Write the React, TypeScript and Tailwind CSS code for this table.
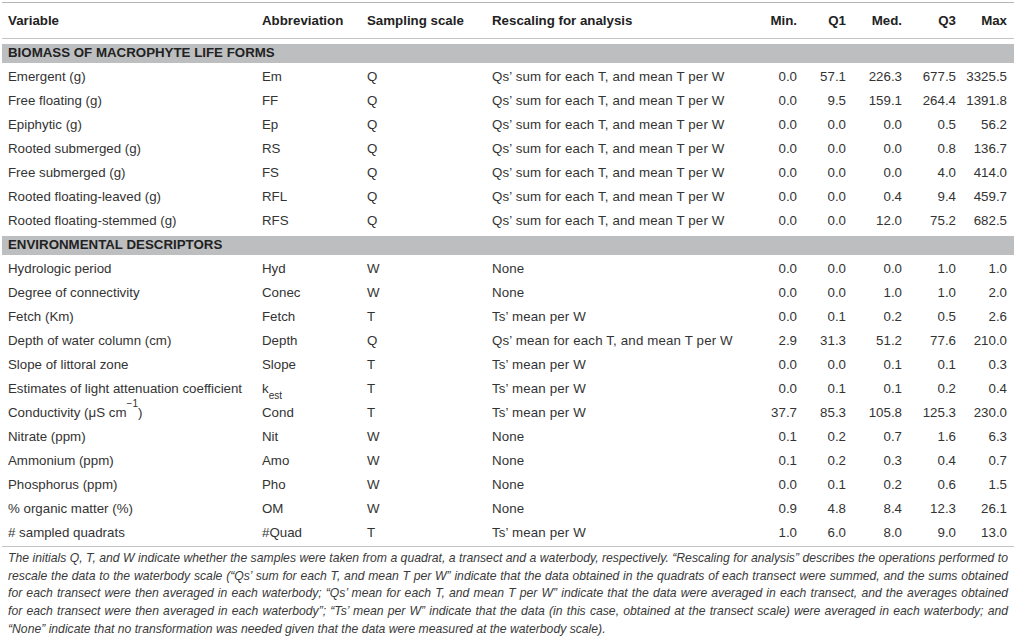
import React from "react";

type Row = {
  v: React.ReactNode;
  a: React.ReactNode;
  s: string;
  r: string;
  n: string[];
};

const SUM = "Qs\u2019 sum for each T, and mean T per W";
const TS = "Ts\u2019 mean per W";

const bio: Row[] = [
  { v: "Emergent (g)", a: "Em", s: "Q", r: SUM, n: ["0.0", "57.1", "226.3", "677.5", "3325.5"] },
  { v: "Free floating (g)", a: "FF", s: "Q", r: SUM, n: ["0.0", "9.5", "159.1", "264.4", "1391.8"] },
  { v: "Epiphytic (g)", a: "Ep", s: "Q", r: SUM, n: ["0.0", "0.0", "0.0", "0.5", "56.2"] },
  { v: "Rooted submerged (g)", a: "RS", s: "Q", r: SUM, n: ["0.0", "0.0", "0.0", "0.8", "136.7"] },
  { v: "Free submerged (g)", a: "FS", s: "Q", r: SUM, n: ["0.0", "0.0", "0.0", "4.0", "414.0"] },
  { v: "Rooted floating-leaved (g)", a: "RFL", s: "Q", r: SUM, n: ["0.0", "0.0", "0.4", "9.4", "459.7"] },
  { v: "Rooted floating-stemmed (g)", a: "RFS", s: "Q", r: SUM, n: ["0.0", "0.0", "12.0", "75.2", "682.5"] },
];

const env: Row[] = [
  { v: "Hydrologic period", a: "Hyd", s: "W", r: "None", n: ["0.0", "0.0", "0.0", "1.0", "1.0"] },
  { v: "Degree of connectivity", a: "Conec", s: "W", r: "None", n: ["0.0", "0.0", "1.0", "1.0", "2.0"] },
  { v: "Fetch (Km)", a: "Fetch", s: "T", r: TS, n: ["0.0", "0.1", "0.2", "0.5", "2.6"] },
  {
    v: "Depth of water column (cm)",
    a: "Depth",
    s: "Q",
    r: "Qs\u2019 mean for each T, and mean T per W",
    n: ["2.9", "31.3", "51.2", "77.6", "210.0"],
  },
  { v: "Slope of littoral zone", a: "Slope", s: "T", r: TS, n: ["0.0", "0.0", "0.1", "0.1", "0.3"] },
  {
    v: "Estimates of light attenuation coefficient",
    a: (
      <span>
        k<sub className="text-[10px] align-[-3px] leading-none">est</sub>
      </span>
    ),
    s: "T",
    r: TS,
    n: ["0.0", "0.1", "0.1", "0.2", "0.4"],
  },
  {
    v: (
      <span>
        Conductivity ({"\u03bc"}S cm<sup className="text-[10px] align-[5px] leading-none">{"\u2212"}1</sup>)
      </span>
    ),
    a: "Cond",
    s: "T",
    r: TS,
    n: ["37.7", "85.3", "105.8", "125.3", "230.0"],
  },
  { v: "Nitrate (ppm)", a: "Nit", s: "W", r: "None", n: ["0.1", "0.2", "0.7", "1.6", "6.3"] },
  { v: "Ammonium (ppm)", a: "Amo", s: "W", r: "None", n: ["0.1", "0.2", "0.3", "0.4", "0.7"] },
  { v: "Phosphorus (ppm)", a: "Pho", s: "W", r: "None", n: ["0.0", "0.1", "0.2", "0.6", "1.5"] },
  { v: "% organic matter (%)", a: "OM", s: "W", r: "None", n: ["0.9", "4.8", "8.4", "12.3", "26.1"] },
  { v: "# sampled quadrats", a: "#Quad", s: "T", r: TS, n: ["1.0", "6.0", "8.0", "9.0", "13.0"] },
];

const GRID =
  "grid grid-cols-[254px_105px_125px_265px_40px_49px_56px_54px_51px] items-center";

function DataRow({ row }: { row: Row }) {
  return (
    <div className={`${GRID} h-[24px] px-[6px]`}>
      <div className="whitespace-nowrap">{row.v}</div>
      <div className="whitespace-nowrap">{row.a}</div>
      <div>{row.s}</div>
      <div className="whitespace-nowrap tracking-[0.15px]">{row.r}</div>
      {row.n.map((x, i) => (
        <div key={i} className="text-right">
          {x}
        </div>
      ))}
    </div>
  );
}

function Section({ title }: { title: string }) {
  return (
    <div className="h-[24px] flex items-center">
      <div className="w-full h-[19px] bg-[#bdbec0] flex items-center px-[6px] font-bold text-[#222]">
        {title}
      </div>
    </div>
  );
}

const notes = [
  "The initials Q, T, and W indicate whether the samples were taken from a quadrat, a transect and a waterbody, respectively. \u201cRescaling for analysis\u201d describes the operations performed to",
  "rescale the data to the waterbody scale (\u201cQs\u2019 sum for each T, and mean T per W\u201d indicate that the data obtained in the quadrats of each transect were summed, and the sums obtained",
  "for each transect were then averaged in each waterbody; \u201cQs\u2019 mean for each T, and mean T per W\u201d indicate that the data were averaged in each transect, and the averages obtained",
  "for each transect were then averaged in each waterbody\u201d; \u201cTs\u2019 mean per W\u201d indicate that the data (in this case, obtained at the transect scale) were averaged in each waterbody; and",
];

export default function App() {
  return (
    <div className="w-[1016px] h-[643px] bg-white overflow-hidden font-['Liberation_Sans',Arial,sans-serif] text-[13.3px] text-[#333] pt-[2px] px-[2px]">
      <div className="border-t border-[#b5b5b5]">
        <div className={`${GRID} h-[36px] px-[6px] font-bold text-[#222] border-b border-[#c4c4c4]`}>
          <div>Variable</div>
          <div>Abbreviation</div>
          <div>Sampling scale</div>
          <div>Rescaling for analysis</div>
          <div className="text-right">Min.</div>
          <div className="text-right">Q1</div>
          <div className="text-right">Med.</div>
          <div className="text-right">Q3</div>
          <div className="text-right">Max</div>
        </div>
        <div className="pt-[2px]">
          <Section title="BIOMASS OF MACROPHYTE LIFE FORMS" />
          {bio.map((r, i) => (
            <DataRow key={i} row={r} />
          ))}
          <Section title="ENVIRONMENTAL DESCRIPTORS" />
          {env.map((r, i) => (
            <DataRow key={i} row={r} />
          ))}
        </div>
        <div className="border-t border-[#c4c4c4] mt-[1px] pt-[3px] px-[6px] italic text-[12.2px] text-[#3a3a3a] leading-[17.7px]">
          {notes.map((t, i) => (
            <div key={i} className="whitespace-nowrap text-justify [text-align-last:justify]">
              {t}
            </div>
          ))}
          <div className="whitespace-nowrap">
            {"\u201cNone\u201d indicate that no transformation was needed given that the data were measured at the waterbody scale)."}
          </div>
        </div>
      </div>
    </div>
  );
}
